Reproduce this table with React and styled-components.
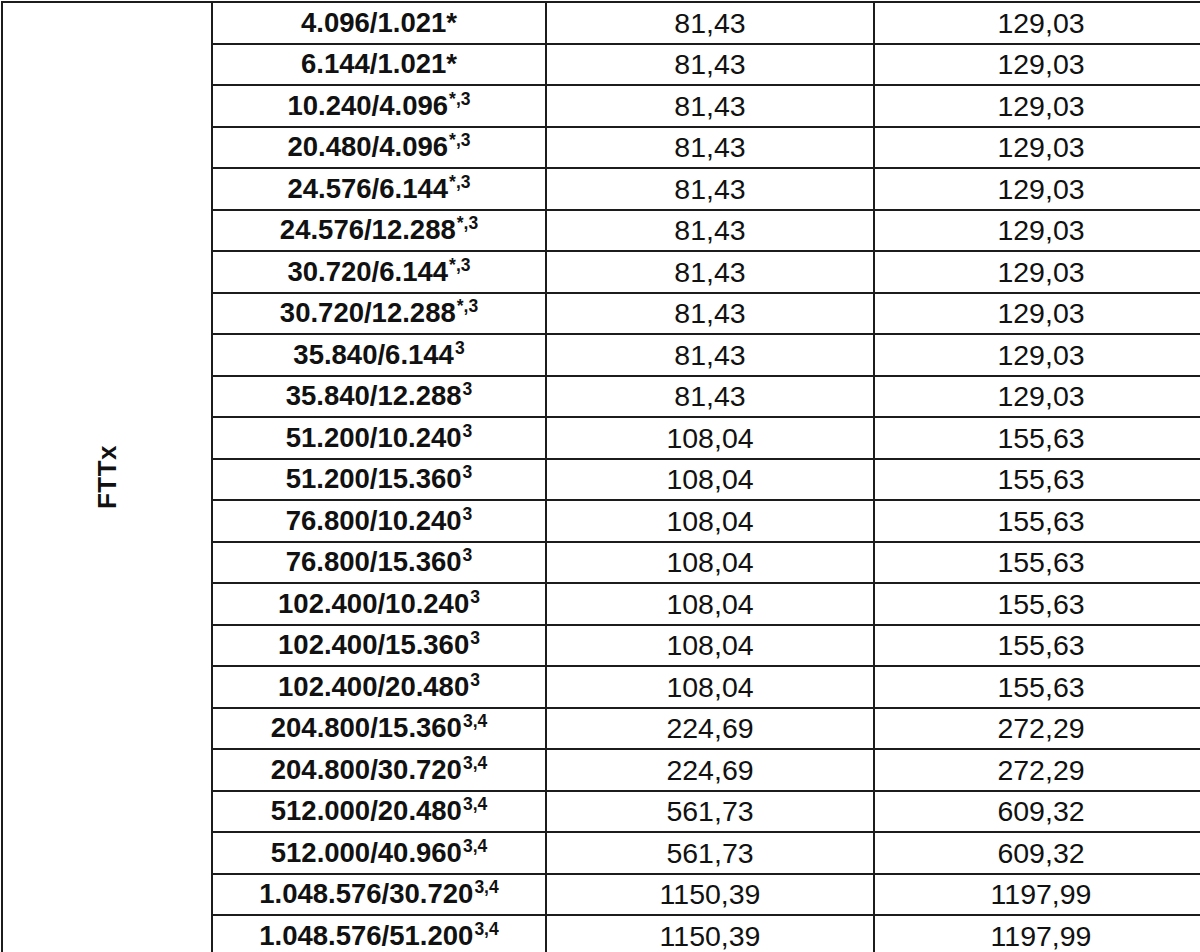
import React from 'react'
import styled, { createGlobalStyle } from 'styled-components'

const GlobalStyle = createGlobalStyle`
html, body {
  margin: 0;
  padding: 0;
  background: #ffffff;
  overflow: hidden;
}
body {
  font-family: "Liberation Sans", Arial, sans-serif;
  color: #111111;
}
`;

const Page = styled.div`
width: 1200px;
height: 952px;
overflow: hidden;
padding-top: 1px;
box-sizing: border-box;
`;

const Table = styled.table`
border-collapse: collapse;
table-layout: fixed;
width: 1206px;
margin-left: 1px;
`;

const Row = styled.tr`
height: 41.5px;
`;

const Cell = styled.td`
border: 2px solid #1c1c1c;
padding: 0;
text-align: center;
vertical-align: middle;
font-size: ${p => (p.$bold ? '27.5px' : '28.5px')};
line-height: 30px;
font-weight: ${p => (p.$bold ? 700 : 400)};
white-space: nowrap;
`;

const GroupCell = styled(Cell)`
font-weight: 700;
`;

const VerticalLabel = styled.span`
display: inline-block;
writing-mode: vertical-rl;
transform: rotate(180deg);
font-size: 26px;
letter-spacing: 0.5px;
`;

const Sup = styled.sup`
font-size: 17.5px;
line-height: 0;
vertical-align: 0;
position: relative;
top: -10px;
margin-left: 1px;
`;

const rows = [
  ['4.096/1.021*', '', '81,43', '129,03'],
  ['6.144/1.021*', '', '81,43', '129,03'],
  ['10.240/4.096', '*,3', '81,43', '129,03'],
  ['20.480/4.096', '*,3', '81,43', '129,03'],
  ['24.576/6.144', '*,3', '81,43', '129,03'],
  ['24.576/12.288', '*,3', '81,43', '129,03'],
  ['30.720/6.144', '*,3', '81,43', '129,03'],
  ['30.720/12.288', '*,3', '81,43', '129,03'],
  ['35.840/6.144', '3', '81,43', '129,03'],
  ['35.840/12.288', '3', '81,43', '129,03'],
  ['51.200/10.240', '3', '108,04', '155,63'],
  ['51.200/15.360', '3', '108,04', '155,63'],
  ['76.800/10.240', '3', '108,04', '155,63'],
  ['76.800/15.360', '3', '108,04', '155,63'],
  ['102.400/10.240', '3', '108,04', '155,63'],
  ['102.400/15.360', '3', '108,04', '155,63'],
  ['102.400/20.480', '3', '108,04', '155,63'],
  ['204.800/15.360', '3,4', '224,69', '272,29'],
  ['204.800/30.720', '3,4', '224,69', '272,29'],
  ['512.000/20.480', '3,4', '561,73', '609,32'],
  ['512.000/40.960', '3,4', '561,73', '609,32'],
  ['1.048.576/30.720', '3,4', '1150,39', '1197,99'],
  ['1.048.576/51.200', '3,4', '1150,39', '1197,99'],
];

const App = () => {
  return (
    <Page>
      <GlobalStyle />
      <Table>
        <colgroup>
          <col style={{ width: 210 }} />
          <col style={{ width: 334 }} />
          <col style={{ width: 328 }} />
          <col style={{ width: 334 }} />
        </colgroup>
        <tbody>
          {rows.map(([speed, note, a, b], i) => (
            <Row key={i}>
              {i === 0 && (
                <GroupCell rowSpan={rows.length}>
                  <VerticalLabel>FTTx</VerticalLabel>
                </GroupCell>
              )}
              <Cell $bold>
                {speed}
                {note && <Sup>{note}</Sup>}
              </Cell>
              <Cell>{a}</Cell>
              <Cell>{b}</Cell>
            </Row>
          ))}
        </tbody>
      </Table>
    </Page>
  )
}

export default App
